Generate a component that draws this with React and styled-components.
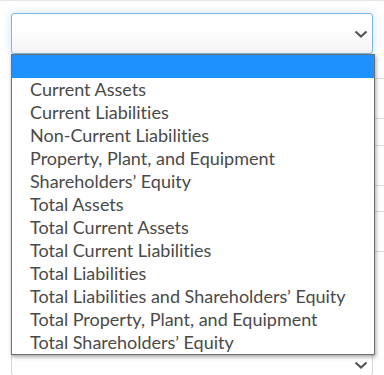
import React from 'react'
import styled, {createGlobalStyle} from "styled-components";

const GlobalStyle = createGlobalStyle`
    body {
        margin: 0;
        background: #fff;
        font-family: Lato, "Open Sans", sans-serif;
        overflow: hidden;
    }
`;

const Page = styled.div`
    border-top: 1px solid #e6e6e6;
    height: 374px;
    overflow: hidden;
`;

const Form = styled.div`
    position: relative;
    padding: 12px 11px 0;
`;

const SelectBox = styled.div`
    box-sizing: border-box;
    height: ${p => p.$height || 41}px;
    width: 362px;
    border: 1px solid ${p => p.$focused ? "#7fb7ec" : "#d9d9d9"};
    border-radius: 3px;
    background: ${p => p.$focused ? "linear-gradient(#fff 40%, #f3f3f3)" : "#fff"};
    box-shadow: ${p => p.$focused ? "0 0 8px rgba(102, 170, 240, 0.35)" : "none"};
    display: flex;
    align-items: center;
    justify-content: flex-end;
    padding-right: 4px;
`;

const Chevron = () => (
    <svg width="14" height="8" viewBox="0 0 14 8">
        <path d="M1.5 1.5 L7 6.5 L12.5 1.5" fill="none" stroke="#555" strokeWidth="2.2"/>
    </svg>
);

const Row = styled.div`
    height: ${p => p.$height}px;
    border-bottom: 1px solid #dcdcdc;
    margin-right: -11px;
`;

const Options = styled.ul`
    position: absolute;
    top: 53px;
    left: 11px;
    width: 362px;
    margin: 0;
    padding: 0;
    list-style: none;
    background: #fff;
    border: 1px solid #6f6f6f;
    box-shadow: 1px 2px 4px rgba(0, 0, 0, 0.35);
    z-index: 2;
`;

const Option = styled.li`
    height: 23px;
    line-height: 23px;
    padding-left: 18px;
    font-size: 18px;
    font-variant-ligatures: none;
    color: #4a4a4a;
    background: ${p => p.$selected ? "#1e90ff" : "transparent"};
    white-space: nowrap;
`;

const items = [
    "",
    "Current Assets",
    "Current Liabilities",
    "Non-Current Liabilities",
    "Property, Plant, and Equipment",
    "Shareholders\u2019 Equity",
    "Total Assets",
    "Total Current Assets",
    "Total Current Liabilities",
    "Total Liabilities",
    "Total Liabilities and Shareholders\u2019 Equity",
    "Total Property, Plant, and Equipment",
    "Total Shareholders\u2019 Equity",
];

const App = () => {
    return (
        <Page>
            <GlobalStyle/>
            <Form>
                <SelectBox $focused><Chevron/></SelectBox>
                <Row $height={24}/>
                <Row $height={39}/>
                <Row $height={26}/>
                <Row $height={39}/>
                <Row $height={25}/>
                <Row $height={39}/>
                <div style={{height: 102}}/>
                <SelectBox $height={22}><Chevron/></SelectBox>
                <Options>
                    {items.map((item, i) => (
                        <Option key={i} $selected={i === 0}>{item || "\u00a0"}</Option>
                    ))}
                </Options>
            </Form>
        </Page>
    )
};
export default App;
